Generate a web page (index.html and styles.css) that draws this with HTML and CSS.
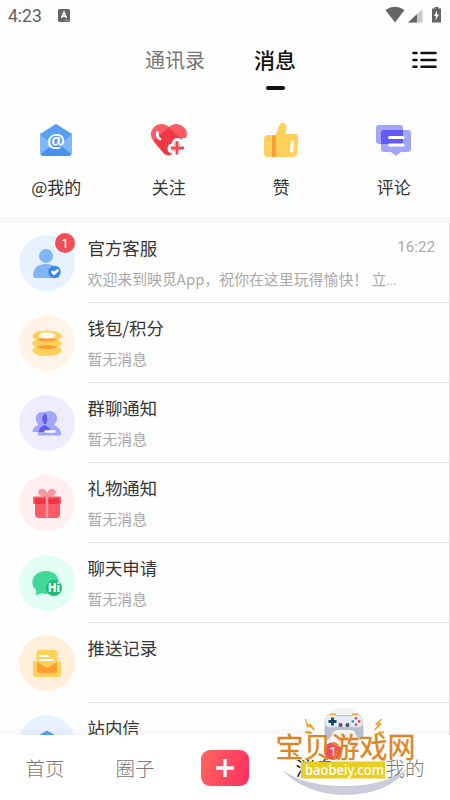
FILE: index.html
```html
<!DOCTYPE html>
<html lang="zh-CN">
<head>
<meta charset="utf-8">
<title>消息</title>
<link rel="stylesheet" href="styles.css">
</head>
<body>
<div class="app">
  <header class="status">
    <span class="clock">4:23</span>
    <svg class="ime" width="12" height="13" viewBox="0 0 12 13"><rect width="12" height="13" rx="1.500" fill="#666"/><path d="M3.500 9 6 3.200 8.500 9M4.400 7.200h3.200" fill="none" stroke="#fff" stroke-width="1.500"/><path d="M6.500 11.300h4" stroke="#ccc" stroke-width=".7"/></svg>
    <svg class="signals" width="58" height="18" viewBox="0 0 58 18"><path d="M.5 4Q9.800-2.500 19.500 4L10 16.500z" fill="#646464"/><path d="M37.500 3v13.500H23z" fill="#c9c9c9"/><path d="M32 8.200v8.300h-9z" fill="#646464"/><path d="M47 2.500h2.500V1h4v1.500H56v14h-9z" fill="#646464"/><path d="m52 4.500-3 5.500h2l-.6 4.500L54 8.500h-2z" fill="#fff"/></svg>
  </header>
  <nav class="tabs">
    <span class="tab contacts">通讯录</span>
    <span class="tab active">消息</span>
    <svg class="menu" width="26" height="18" viewBox="0 0 26 18"><path d="M1.500 2h3M9.500 2h14M1.500 9h3M9.500 9h14M1.500 15.700h3M9.500 15.700h14" stroke="#111" stroke-width="2.600" stroke-linecap="round"/></svg>
  </nav>
  <section class="quick">
    <div class="quick-item">
      <svg width="38" height="38" viewBox="0 0 38 38"><path d="M3 13 19 3l16 10v18q0 4-4 4H7q-4 0-4-4z" fill="#579ff2"/><path d="M3 13 15 24 3 33zM35 13 23 24l12 9z" fill="#82b8fa"/><path d="m4 34 15-13 15 13q-1 1-3 1H7q-2 0-3-1z" fill="#4792ed"/><text x="19" y="27" text-anchor="middle" class="at">@</text></svg>
      <span>@我的</span>
    </div>
    <div class="quick-item">
      <svg width="38" height="38" viewBox="0 0 38 38"><path d="M19 6C13 1 6 3 2.500 8c-4 7-1 11 11.500 24.500 3 2.500 6 2.500 9 0C35 20 39 15 36 9 32 2 24 1 19 6z" fill="#fb5a66"/><path d="M19 6 32 19 22 33q-3 2-8-.5L4 19z" fill="#ef3944"/><path d="M7.500 11.500q-1 5 2.500 6.500" fill="none" stroke="#fff" stroke-width="2.800" stroke-linecap="round"/><path d="M21 37 38 37V17h-5.500z" fill="#fefefe"/><path d="M23 33q-5.500-1-5.500-5.500 0-4 4-5 1-5.500 6-5.500 4.500 0 5.500 5.500l4 1v10z" fill="#fefefe"/><path d="M23 30q-2.500-.5-2.500-2.700t3.500-2.500q0-4.500 3-4.800 3 .3 3 4.500l-4 6z" fill="#f24854"/><path d="M27 21v13M20.500 27h13.500" stroke="#fefefe" stroke-width="4.600"/><path d="M27 20.500v13M21 27h13" stroke="#f24854" stroke-width="2.800"/></svg>
      <span>关注</span>
    </div>
    <div class="quick-item">
      <svg width="38" height="38" viewBox="0 0 38 38"><path d="M6 14h6.500q2-1 3.500-6 1-6 4.500-6 4.500.5 4 6l-1 5H33q3.500 0 3.300 4L35 32q-.5 4-4 4H6q-4 0-4-4V18q0-4 4-4z" fill="#ffd15c"/><path d="M10 14.500h4V36h-4z" fill="#ff9d32"/><path d="m30.500 21-1 9" stroke="#fff" stroke-width="3" stroke-linecap="round"/></svg>
      <span>赞</span>
    </div>
    <div class="quick-item">
      <svg width="38" height="38" viewBox="0 0 38 38"><rect x="1" y="4" width="27" height="19" rx="3" fill="#a3a6f8"/><path d="M9 9h24q3 0 3 3v16q0 3-3 3h-7l-5 4-5-4H9q-3 0-3-3V12q0-3 3-3z" fill="#a3a6f8"/><path d="M9 9h19v11q0 3-3 3H6V12q0-3 3-3z" fill="#615bf3"/><path d="M14.500 16.500H28M14.500 24H28" stroke="#fff" stroke-width="3" stroke-linecap="round"/></svg>
      <span>评论</span>
    </div>
  </section>
  <main class="list">
    <article class="row">
      <div class="avatar blue"><svg width="32" height="32" viewBox="0 0 32 32"><circle cx="15" cy="9" r="7" fill="#80b5f8"/><path d="M2 28q1-11 13-11t13 11q0 3-2 3H4q-2 0-2-3z" fill="#80b5f8"/><circle cx="23.500" cy="25" r="6.200" fill="#3985ef"/><path d="m21.500 25 1.500 1.500 3.500-3" fill="none" stroke="#fff" stroke-width="2.800" stroke-linecap="round"/></svg><b class="badge">1</b></div>
      <div class="body"><div class="line"><h2>官方客服</h2><time>16:22</time></div><p>欢迎来到映觅App，祝你在这里玩得愉快！ 立<span class="dots">...</span></p></div>
    </article>
    <article class="row">
      <div class="avatar cream"><svg width="32" height="32" viewBox="0 0 32 32"><ellipse cx="16" cy="23.500" rx="14.500" ry="5.500" fill="#ffd15c"/><ellipse cx="16" cy="16.500" rx="14.500" ry="5.500" fill="#ffd15c"/><path d="M5 20q11-4 22 0-11 4-22 0z" fill="#ff9d32"/><ellipse cx="16" cy="9" rx="14.500" ry="5.500" fill="#ffd15c"/><path d="M5 12.500q11-3 22 0-11 4-22 0z" fill="#ff9d32"/><ellipse cx="16" cy="8.500" rx="8.500" ry="3" fill="#fff"/></svg></div>
      <div class="body"><h2>钱包/积分</h2><p>暂无消息</p></div>
    </article>
    <article class="row">
      <div class="avatar violet"><svg width="32" height="32" viewBox="0 0 32 32"><path d="M11.500 5C4 5 3 13 7.500 18 4 19 1.500 21 1.500 25H18V9q-2-4-6.500-4z" fill="#a3a6f8"/><path d="M18.500 4c-8 0-9 9-4.500 14-4 2-7 4-7 8v2.500h22q2 0 1-3-1-5-7-7.500c5.500-5 3.500-14-4.500-14z" fill="#a3a6f8"/><path d="M14 6q4 4 1 11h-2q-4-7 1-11zM13.500 18q5.500 2 6.500 7H7.500q1-5 6-7z" fill="#605bf0"/><path d="M14.500 24.500h9" stroke="#fff" stroke-width="2.500" stroke-linecap="round"/></svg></div>
      <div class="body"><h2>群聊通知</h2><p>暂无消息</p></div>
    </article>
    <article class="row">
      <div class="avatar pink"><svg width="32" height="32" viewBox="0 0 32 32"><path d="M15 10C5 9 6 3 10 2q4-1 6 4 2-5 6-4c4 1 5 7-5 8z" fill="#f79ba1"/><path d="M4 14h25v13q0 4-4 4H8q-4 0-4-4z" fill="#fb5b66"/><rect x="2" y="9.500" width="28" height="7.500" rx="1.500" fill="#fb5b66"/><path d="M4 11.500h24V17H4z" fill="#ef3540"/><path d="M16 8v22.500" stroke="#f9949a" stroke-width="2.500"/></svg></div>
      <div class="body"><h2>礼物通知</h2><p>暂无消息</p></div>
    </article>
    <article class="row">
      <div class="avatar mint"><svg width="32" height="32" viewBox="0 0 32 32"><path d="M15 4c17 0 17 23 0 23q-2 0-4-1-3 2-7 2 2-2 1-5C-3 16 3 4 15 4z" fill="#42d898"/><circle cx="23" cy="21" r="8" fill="#1eb974"/><text x="23" y="25.300" text-anchor="middle" class="hi">Hi</text></svg></div>
      <div class="body"><h2>聊天申请</h2><p>暂无消息</p></div>
    </article>
    <article class="row">
      <div class="avatar orange"><svg width="32" height="32" viewBox="0 0 32 32"><rect x="5.500" y="3" width="21" height="20" rx="3" fill="#ffd15c"/><path d="M2 14h3l11 8 11-8h3v13q0 3-3 3H5q-3 0-3-3z" fill="#ffd15c"/><path d="m6 15 10 6 10-6v8q0 3-3 3H9q-3 0-3-3z" fill="#ff9d32"/><path d="M9.500 9H17M9.500 13H22" stroke="#fff" stroke-width="2.200" stroke-linecap="round"/></svg></div>
      <div class="body"><h2>推送记录</h2></div>
    </article>
    <article class="row">
      <div class="avatar blue"><svg width="32" height="32" viewBox="0 0 32 32"><path d="m2 11.500 14-8 14 8v18H2z" fill="#579ff2"/></svg></div>
      <div class="body"><h2>站内信</h2></div>
    </article>
  </main>
  <footer class="nav">
    <span>首页</span><span>圈子</span>
    <span><i class="plus"><svg width="20" height="20" viewBox="0 0 20 20"><path d="M10 1v18M1 10h18" stroke="#fff" stroke-width="3.400"/></svg></i></span>
    <span class="current">消息<b class="badge small">1</b></span><span>我的</span>
  </footer>
  <svg class="stamp" width="160" height="100" viewBox="270 700 160 100">
    <circle cx="344" cy="727" r="20" fill="#eeeff2" opacity=".75"/>
    <path d="M281 769q22 17 63 17 42 0 64-18-20 27-64 27-40-1-63-26z" fill="#c9ccdb"/>
    <path d="M331 715q-5 0-6 8l-.5 11q0 6 3 6 2.500-.5 5.500-7.500 1-2.500 4-2.500h14q3 0 4 2.500 3 7 5.500 7.500 3 0 3-6l-.5-11q-1-8-6-8z" fill="#b9bed1"/>
    <path d="M331 714.500q-5 0-6 6.500-.5 6 5 6.500 3 0 5-.5h18q2 .5 5 .5 5.500-.5 5-6.500-1-6.500-6-6.500h-4l-2 1.500h-14l-2-1.500z" fill="#e9ebf4" stroke="#c3c7d8" stroke-width=".6"/>
    <path d="M330 714.300h6M352 714.300h6" stroke="#eea62b" stroke-width="1.500"/>
    <path d="M332.500 717.500v8M328.500 721.500h8" stroke="#174859" stroke-width="2.800"/>
    <circle cx="340.500" cy="725" r="2" fill="#345064"/><circle cx="347.500" cy="725" r="2" fill="#345064"/>
    <circle cx="340.500" cy="725" r=".7" fill="#e05060"/><circle cx="347.500" cy="725" r=".7" fill="#e05060"/>
    <circle cx="356" cy="718.300" r="1.400" fill="#d65561"/><circle cx="356" cy="724.700" r="1.400" fill="#d65561"/><circle cx="352.800" cy="721.500" r="1.400" fill="#30a3b7"/><circle cx="359.200" cy="721.500" r="1.400" fill="#d94b5a"/>
    <path d="m305.500 719 2 6 3-1 4 6-5-3.500-2 1zM381.500 719l-6 5 3 .5-4 5.500 7-6-3-.5zM305 732l4 2 3-1-3-2zM384 732h-5l-4 3 5-1z" fill="#f5b51c" stroke="#e8941c" stroke-width=".8"/>
    <text x="275.500" y="758" class="stamp-title">宝贝游戏网</text>
    <rect x="301" y="761.500" width="84" height="17" fill="#e8ce20"/>
    <text x="305" y="775" textLength="79" lengthAdjust="spacingAndGlyphs" class="stamp-url">baobeiy.com</text>
  </svg>
</div>
</body>
</html>
```

FILE: styles.css
```css
* { box-sizing: border-box; }
body { margin: 0; background: #fff; font-family: "Noto Sans", "Noto Sans CJK SC", sans-serif; }
.app { position: relative; width: 450px; height: 800px; overflow: hidden; display: flex; flex-direction: column; background: #fefefe; }
svg { display: block; flex: none; }

.status { height: 32px; display: flex; align-items: center; padding: 0 8px; color: #606060; }
.clock { width: 34px; font: 17.500px/32px Roboto, sans-serif; }
.ime { margin-left: 16px; margin-top: -2px; }
.signals { margin-left: auto; margin-right: -1px; margin-top: -3px; }

.tabs { height: 72px; flex: none; display: flex; align-items: flex-start; padding: 12px 12px 0 145px; }
.tab { font: 20px/32px "Noto Sans CJK SC", sans-serif; color: #777; }
.tab.active { margin-left: 49px; display: flex; flex-direction: column; align-items: center; font-size: 21px; font-weight: 500; line-height: 30px; color: #111; }
.tab.active::after { content: ""; width: 19px; height: 4px; border-radius: 2px; background: #111; margin-top: 12px; }
.menu { margin: 7px 0 0 auto; }

.quick { height: 119px; flex: none; display: grid; grid-template-columns: repeat(4, 1fr); border-bottom: 6px solid #f7f7f7; }
.quick-item { display: flex; flex-direction: column; align-items: center; padding-top: 17px; gap: 15px; font: 17px/26px "Noto Sans CJK SC", sans-serif; color: #333; }
.at { font: 600 20px "Noto Sans", sans-serif; fill: #fff; }
.hi { font: 800 11.500px "Noto Sans", sans-serif; fill: #fff; }

.list { height: 512px; flex: none; overflow: hidden; border-right: 1px solid #ddd; }
.row { height: 80px; display: flex; padding-left: 19px; }
.avatar { position: relative; width: 56px; height: 56px; flex: none; margin: 12px 12.500px 0 0; border-radius: 50%; display: grid; place-items: center; }
.blue { background: #e8f2fe; }
.cream { background: #fff4e7; }
.violet { background: #efecff; }
.pink { background: #ffefee; }
.mint { background: #e2fff3; }
.orange { background: #ffefdb; }
.body { flex: 1; height: 80px; border-bottom: 1px solid #e8e8e8; padding: 11.500px 14px 0 0; }
.line { display: flex; justify-content: space-between; }
h2 { margin: 0; font: 17.400px/26px "Noto Sans CJK SC", sans-serif; color: #363636; }
time { font: 15.200px/24px Roboto, sans-serif; color: #aaa; }
p { margin: 6px 0 0; font: 14.900px/24px "Noto Sans CJK SC", sans-serif; color: #a9a9a9; white-space: nowrap; }
.dots { font-family: Roboto, sans-serif; font-size: 13px; }
.badge { position: absolute; top: -2px; right: 0; width: 20px; height: 20px; border-radius: 50%; background: #f14f56; color: #fff; text-align: center; font: 13.500px/20px Roboto, sans-serif; }

.nav { height: 65px; flex: none; display: grid; grid-template-columns: repeat(5, 1fr); background: #fff; box-shadow: 0 -3px 12px rgba(0, 0, 0, .04); position: relative; font: 300 19.500px/64px "Noto Sans CJK SC", sans-serif; color: #777; text-align: center; }
.nav span { position: relative; display: flex; justify-content: center; align-items: center; }
.nav .current { color: #222; font-weight: 400; }
.plus { width: 48px; height: 36px; border-radius: 9px; display: grid; place-items: center; background: linear-gradient(110deg, #ff665f, #fd2e61); }
.nav .small { top: 7px; right: 18px; width: 18px; height: 18px; line-height: 18px; }
.stamp { position: absolute; left: 270px; top: 700px; }
.stamp-title { font: 400 28px "Noto Sans CJK SC", sans-serif; fill: #de8421; stroke: #de8421; stroke-width: .3px; }
.stamp-url { font: 500 14.500px "Noto Sans", sans-serif; fill: #fff; }
```
